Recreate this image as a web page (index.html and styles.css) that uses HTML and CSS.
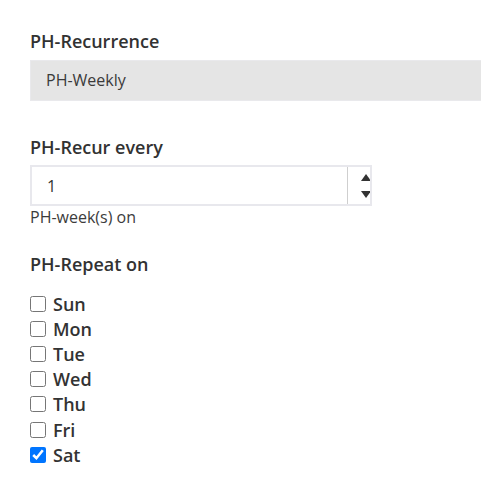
FILE: index.html
```html
<!DOCTYPE html>
<html>
<head>
<meta charset="utf-8">
<link rel="stylesheet" href="styles.css">
</head>
<body>
<div class="form">
  <div class="label first">PH-Recurrence</div>
  <div class="select">PH-Weekly</div>

  <div class="label recur">PH-Recur every</div>
  <div class="number">
    <span class="value">1</span>
    <span class="spinner">
      <svg width="22" height="37" viewBox="0 0 22 37">
        <polygon points="18,7 23,14 13,14" fill="#333"/>
        <polygon points="13,24 23,24 18,31" fill="#333"/>
      </svg>
    </span>
  </div>
  <div class="hint">PH-week(s) on</div>

  <div class="label repeat">PH-Repeat on</div>
  <div class="days">
    <label class="day"><input type="checkbox"><span>Sun</span></label>
    <label class="day"><input type="checkbox"><span>Mon</span></label>
    <label class="day"><input type="checkbox"><span>Tue</span></label>
    <label class="day"><input type="checkbox"><span>Wed</span></label>
    <label class="day"><input type="checkbox"><span>Thu</span></label>
    <label class="day"><input type="checkbox"><span>Fri</span></label>
    <label class="day"><input type="checkbox" checked><span>Sat</span></label>
  </div>
</div>
</body>
</html>
```

FILE: styles.css
```css
html, body {
  margin: 0;
  padding: 0;
  background: #fff;
  overflow: hidden;
}
body {
  font-family: "Open Sans", "Liberation Sans", sans-serif;
  color: #333;
}
.form {
  display: flex;
  flex-direction: column;
  padding: 29px 0 0 30px;
}
.label {
  font-size: 18px;
  font-weight: 600;
  line-height: 24px;
  color: #323232;
}
.select {
  margin-top: 7px;
  height: 39px;
  border: 1px solid #e9e9ec;
  border-right: none;
  background: #e5e5e5;
  font-size: 16px;
  line-height: 39px;
  padding-left: 15px;
  color: #3a3a3a;
}
.recur {
  margin-top: 34px;
}
.number {
  margin-top: 6px;
  width: 338px;
  height: 37px;
  border: 2px solid #e8e8ed;
  display: flex;
  align-items: center;
  justify-content: space-between;
}
.value {
  font-size: 16px;
  padding-left: 15px;
  color: #333;
}
.spinner {
  display: flex;
  height: 37px;
  width: 22px;
  border-left: 1px solid #cfcfcf;
  overflow: hidden;
}
.hint {
  font-size: 16px;
  line-height: 22px;
  color: #3c3c3c;
}
.repeat {
  margin-top: 24px;
}
.days {
  display: flex;
  flex-direction: column;
  margin-top: 15px;
}
.day {
  display: flex;
  align-items: center;
  height: 25.2px;
  font-size: 18px;
  font-weight: 600;
  color: #333;
}
.day input {
  width: 16px;
  height: 16px;
  margin: 0 7px 0 0;
}
```
